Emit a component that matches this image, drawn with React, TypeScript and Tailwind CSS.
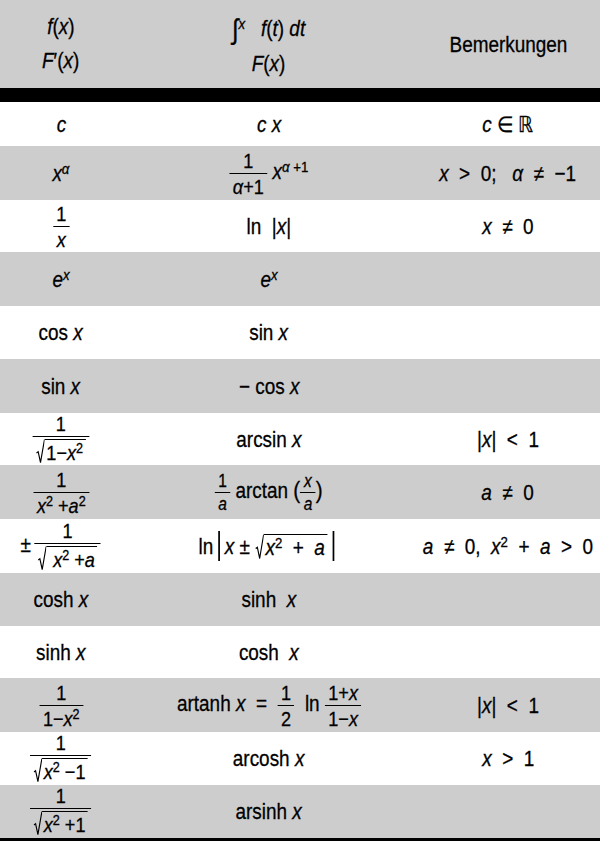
import type { ReactNode } from "react";

const font = { fontFamily: '"Liberation Sans Narrow", "Liberation Sans", Arial, sans-serif' };

function I({ children }: { children: ReactNode }) {
  return <span className="italic">{children}</span>;
}

function Sup({ children }: { children: ReactNode }) {
  return <sup className="relative -top-[0.45em] text-[0.7em] align-baseline">{children}</sup>;
}

function Frac({ n, d, small = false }: { n: ReactNode; d: ReactNode; small?: boolean }) {
  return (
    <span className={`inline-flex flex-col items-center align-middle leading-none ${small ? "text-[18px]" : "text-[21px]"}`}>
      <span className="px-0.5 pb-[2px]">{n}</span>
      <span className="w-full border-t-[1.5px] border-black px-1 pt-[2px]">{d}</span>
    </span>
  );
}

// radical drawn as a stroke so it stretches over its content
function Sqrt({ children }: { children: ReactNode }) {
  return (
    <span className="inline-flex items-stretch leading-none">
      <svg viewBox="0 0 10 24" preserveAspectRatio="none" className="w-[10px] shrink-0">
        <path d="M0.5 14 L2.5 12.8 L5.2 23.5 L9.8 0.6" fill="none" stroke="black" strokeWidth="1.3" vectorEffect="non-scaling-stroke" />
      </svg>
      <span className="border-t-[1.5px] border-black pt-[2px] pl-[2px] pr-[3px]">{children}</span>
    </span>
  );
}

function Bar() {
  return <span className="mx-[6px] inline-block h-[30px] w-[1.5px] bg-black align-middle" />;
}

type Row = { h: string; gray: boolean; a: ReactNode; b: ReactNode; c?: ReactNode };

const rows: Row[] = [
  { h: "h-[44px]", gray: false, a: <I>c</I>, b: <><I>c</I> <I>x</I></>, c: <><I>c</I> ∈ ℝ</> },
  {
    h: "h-[54px]",
    gray: true,
    a: <><I>x</I><Sup><I>α</I></Sup></>,
    b: <><Frac n="1" d={<><I>α</I>+1</>} />&nbsp;<I>x</I><Sup><I>α</I> +1</Sup></>,
    c: <><I>x</I>&nbsp; &gt;&nbsp; 0;&nbsp;&nbsp; <I>α</I>&nbsp; ≠&nbsp; −1</>,
  },
  { h: "h-[52px]", gray: false, a: <Frac n="1" d={<I>x</I>} />, b: <>ln&nbsp; |<I>x</I>|</>, c: <><I>x</I>&nbsp; ≠&nbsp; 0</> },
  { h: "h-[54px]", gray: true, a: <><I>e</I><Sup><I>x</I></Sup></>, b: <><I>e</I><Sup><I>x</I></Sup></> },
  { h: "h-[53px]", gray: false, a: <>cos <I>x</I></>, b: <>sin <I>x</I></> },
  { h: "h-[54px]", gray: true, a: <>sin <I>x</I></>, b: <>− cos <I>x</I></> },
  {
    h: "h-[52px]",
    gray: false,
    a: <Frac n="1" d={<Sqrt>1−<I>x</I><Sup>2</Sup></Sqrt>} />,
    b: <>arcsin <I>x</I></>,
    c: <>|<I>x</I>|&nbsp; &lt;&nbsp; 1</>,
  },
  {
    h: "h-[54px]",
    gray: true,
    a: <Frac n="1" d={<><I>x</I><Sup>2</Sup> +<I>a</I><Sup>2</Sup></>} />,
    b: <><Frac small n="1" d={<I>a</I>} /> arctan <span className="text-[24px]">(</span><Frac small n={<I>x</I>} d={<I>a</I>} /><span className="text-[24px]">)</span></>,
    c: <><I>a</I>&nbsp; ≠&nbsp; 0</>,
  },
  {
    h: "h-[54px]",
    gray: false,
    a: <><span className="mr-[4px]">±</span><Frac n="1" d={<Sqrt>&nbsp;<I>x</I><Sup>2</Sup> +<I>a</I></Sqrt>} /></>,
    b: (
      <span className="inline-flex items-center">
        ln<Bar />
        <I>x</I>&nbsp;±&nbsp;<Sqrt><I>x</I><Sup>2</Sup>&nbsp; +&nbsp; <I>a</I></Sqrt>
        <Bar />
      </span>
    ),
    c: <><I>a</I>&nbsp; ≠&nbsp; 0,&nbsp; <I>x</I><Sup>2</Sup>&nbsp; +&nbsp; <I>a</I>&nbsp; &gt;&nbsp; 0</>,
  },
  { h: "h-[53px]", gray: true, a: <>cosh <I>x</I></>, b: <>sinh&nbsp; <I>x</I></> },
  { h: "h-[52px]", gray: false, a: <>sinh <I>x</I></>, b: <>cosh&nbsp; <I>x</I></> },
  {
    h: "h-[54px]",
    gray: true,
    a: <Frac n="1" d={<>1−<I>x</I><Sup>2</Sup></>} />,
    b: <>artanh <I>x</I>&nbsp; =&nbsp; <Frac n="1" d="2" />&nbsp; ln <Frac n={<>1+<I>x</I></>} d={<>1−<I>x</I></>} /></>,
    c: <>|<I>x</I>|&nbsp; &lt;&nbsp; 1</>,
  },
  {
    h: "h-[53px]",
    gray: false,
    a: <Frac n="1" d={<Sqrt><I>x</I><Sup>2</Sup> −1</Sqrt>} />,
    b: <>arcosh <I>x</I></>,
    c: <><I>x</I>&nbsp; &gt;&nbsp; 1</>,
  },
  {
    h: "h-[53px]",
    gray: true,
    a: <Frac n="1" d={<Sqrt><I>x</I><Sup>2</Sup> +1</Sqrt>} />,
    b: <>arsinh <I>x</I></>,
  },
];

function Cell({ children }: { children?: ReactNode }) {
  return (
    <div className="flex justify-center">
      <span className="inline-block scale-x-[0.86] whitespace-nowrap">{children}</span>
    </div>
  );
}

export default function App() {
  return (
    <div
      className="h-[841px] w-[600px] overflow-hidden bg-white text-[22px] text-black [-webkit-text-stroke:0.3px_black]"
      style={font}
    >
      <div className="grid h-[88px] grid-cols-[122px_294px_184px] items-center bg-[#cdcdcd]">
        <div className="flex flex-col items-center gap-[12px] leading-none">
          <Cell><I>f</I>(<I>x</I>)</Cell>
          <Cell><I>F</I>′(<I>x</I>)</Cell>
        </div>
        <div className="flex flex-col items-center gap-[12px] leading-none">
          <Cell>
            <span className="relative top-[3px] text-[28px]">∫</span>
            <Sup><I>x</I></Sup>&nbsp;&nbsp; <I>f</I>(<I>t</I>) <I>dt</I>
          </Cell>
          <Cell><I>F</I>(<I>x</I>)</Cell>
        </div>
        <Cell>Bemerkungen</Cell>
      </div>
      <div className="h-[14px] bg-black" />
      {rows.map((r, i) => (
        <div
          key={i}
          className={`grid grid-cols-[122px_294px_184px] items-center ${r.h} ${r.gray ? "bg-[#cdcdcd]" : "bg-white"}`}
        >
          <Cell>{r.a}</Cell>
          <Cell>{r.b}</Cell>
          <Cell>{r.c}</Cell>
        </div>
      ))}
      <div className="h-[3px] bg-black" />
    </div>
  );
}
